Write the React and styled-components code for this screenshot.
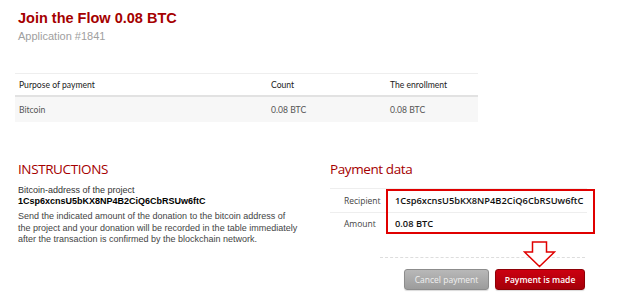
import React from "react";
import styled, { createGlobalStyle } from "styled-components";

const Global = createGlobalStyle`
  html, body { margin: 0; padding: 0; background: #fff; }
  body { font-family: "Liberation Sans", Arial, sans-serif; }
`;

const Page = styled.div`
  width: 640px;
  height: 303px;
  box-sizing: border-box;
  padding: 10px 0 0 15px;
  overflow: hidden;
`;

const Title = styled.h1`
  margin: 0 0 0 3px;
  font: bold 14.5px/17px "Liberation Sans", Arial, sans-serif;
  color: #a50000;
`;

const Subtitle = styled.div`
  margin: 3px 0 0 3px;
  font: 11px/13px "Liberation Sans", Arial, sans-serif;
  color: #a0a0a0;
`;

const Table = styled.table`
  margin-top: 30px;
  width: 463px;
  table-layout: fixed;
  border-collapse: collapse;
  font-family: Lato, "Open Sans", sans-serif;
  font-size: 8.6px;
  border-top: 1px solid #eeeeee;
`;

const Th = styled.th`
  text-align: left;
  font-weight: normal;
  color: #222;
  height: 21px;
  padding: 0 0 0 4px;
  border-bottom: 2px solid #e2e2e2;
  width: ${(p) => p.$w || "auto"};
`;

const Td = styled.td`
  background: #f7f7f7;
  color: #555;
  height: 25px;
  padding: 0 0 0 4px;
`;

const Bottom = styled.div`
  display: flex;
  margin-top: 38px;
`;

const Left = styled.div`
  width: 312px;
  padding-left: 3px;
`;

const Right = styled.div`
  width: 270px;
  display: flex;
  flex-direction: column;
`;

const SectionTitle = styled.h2`
  margin: 0;
  font: 13.5px/18px "Open Sans", sans-serif;
  font-weight: 500;
  letter-spacing: -0.4px;
  color: #a50000;
`;

const Label = styled.div`
  margin-top: 7px;
  font: 9px/11px "Liberation Sans", Arial, sans-serif;
  color: #333;
`;

const Address = styled.div`
  font: bold 9px/11px "Liberation Sans", Arial, sans-serif;
  color: #000;
`;

const Para = styled.p`
  margin: 4px 0 0;
  font: 9px/11.5px "Liberation Sans", Arial, sans-serif;
  color: #444;
`;

const DataBox = styled.div`
  position: relative;
  margin-top: 10px;
  width: 257px;
  border-top: 1px solid #eeeeee;
  font-family: "Open Sans", sans-serif;
  font-size: 8.5px;
`;

const DataRow = styled.div`
  display: flex;
  align-items: center;
  height: ${(p) => (p.$last ? 21 : 23)}px;
  border-bottom: ${(p) => (p.$last ? "none" : "1px solid #eeeeee")};
`;

const DataKey = styled.div`
  box-sizing: border-box;
  width: 56px;
  padding-left: 14px;
  color: #444;
`;

const DataVal = styled.div`
  padding-left: 9px;
  color: #111;
  font-size: 9.3px;
  font-weight: 600;
`;

const Highlight = styled.div`
  position: absolute;
  left: 56px;
  top: 0;
  width: 205px;
  height: 41px;
  border: 2px solid #e00000;
  pointer-events: none;
`;

const Actions = styled.div`
  position: relative;
  margin-top: 23px;
  margin-left: 50px;
  width: 205px;
  border-top: 1px dashed #dddddd;
  padding-top: 11px;
  display: flex;
  justify-content: flex-end;
  gap: 6px;
`;

const Arrow = styled.svg`
  position: absolute;
  left: 143px;
  top: -17px;
`;

const Button = styled.button`
  height: 21px;
  border: 1px solid ${(p) => (p.$primary ? "#8e0006" : "#8c8c8c")};
  border-radius: 3px;
  padding: 0;
  width: ${(p) => p.$w}px;
  font: 8.5px "Open Sans", sans-serif;
  font-weight: ${(p) => (p.$primary ? 600 : 400)};
  color: ${(p) => (p.$primary ? "#fff" : "#f0f0f0")};
  background: ${(p) =>
    p.$primary
      ? "linear-gradient(#cc0010, #a4000a)"
      : "linear-gradient(#b8b8b8, #9c9c9c)"};
  box-shadow: 0 1px 1px rgba(0,0,0,0.15);
`;

export default function App() {
  return (
    <Page>
      <Global />
      <Title>Join the Flow 0.08 BTC</Title>
      <Subtitle>Application #1841</Subtitle>
      <Table>
        <thead>
          <tr>
            <Th $w="248px">Purpose of payment</Th>
            <Th $w="115px">Count</Th>
            <Th>The enrollment</Th>
          </tr>
        </thead>
        <tbody>
          <tr>
            <Td>Bitcoin</Td>
            <Td>0.08 BTC</Td>
            <Td>0.08 BTC</Td>
          </tr>
        </tbody>
      </Table>
      <Bottom>
        <Left>
          <SectionTitle>INSTRUCTIONS</SectionTitle>
          <Label>Bitcoin-address of the project</Label>
          <Address>1Csp6xcnsU5bKX8NP4B2CiQ6CbRSUw6ftC</Address>
          <Para>
            Send the indicated amount of the donation to the bitcoin address of
            <br />
            the project and your donation will be recorded in the table immediately
            <br />
            after the transaction is confirmed by the blockchain network.
          </Para>
        </Left>
        <Right>
          <SectionTitle>Payment data</SectionTitle>
          <DataBox>
            <DataRow>
              <DataKey>Recipient</DataKey>
              <DataVal>1Csp6xcnsU5bKX8NP4B2CiQ6CbRSUw6ftC</DataVal>
            </DataRow>
            <DataRow $last>
              <DataKey>Amount</DataKey>
              <DataVal>0.08 BTC</DataVal>
            </DataRow>
            <Highlight />
          </DataBox>
          <Actions>
            <Arrow width="33" height="27" viewBox="0 0 33 27">
              <path
                d="M9.5 1 H23.5 V11 H31.5 L16.5 25.5 L1.5 11 H9.5 Z"
                fill="#fff"
                stroke="#e00000"
                strokeWidth="1.5"
                strokeLinejoin="miter"
              />
            </Arrow>
            <Button $w={85}>Cancel payment</Button>
            <Button $w={90} $primary>Payment is made</Button>
          </Actions>
        </Right>
      </Bottom>
    </Page>
  );
}
